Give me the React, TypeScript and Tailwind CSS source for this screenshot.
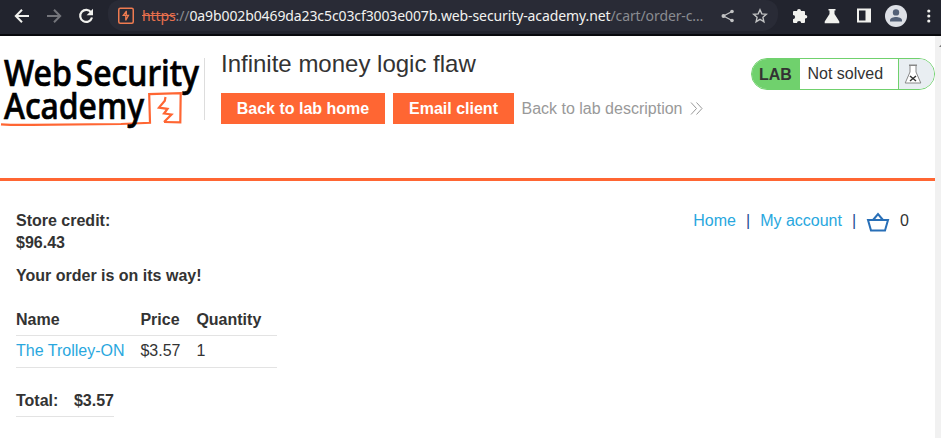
import React from "react";

function BrowserBar() {
  return (
    <div className="flex h-9 w-full items-start border-b-2 border-[#08090d] bg-[#22242e]">
      <div className="flex h-[31px] w-[108px] shrink-0 items-center pl-[14px]">
        <svg width="16" height="16" viewBox="0 0 16 16" fill="none" stroke="#f1f1ee" strokeWidth="2">
          <path d="M15 8H2.5M8 1.7 1.8 8 8 14.3" />
        </svg>
        <svg className="ml-4" width="16" height="16" viewBox="0 0 16 16" fill="none" stroke="#74757b" strokeWidth="2">
          <path d="M1 8h12.5M8 1.7 14.2 8 8 14.3" />
        </svg>
        <svg className="ml-4" width="16" height="16" viewBox="0 0 16 16" fill="none" stroke="#f1f1ee" strokeWidth="2.2">
          <path d="M13.2 4.5A6 6 0 1 0 14 9.5" />
          <path d="M15 .8v6.4H8.6z" fill="#f1f1ee" stroke="none" />
        </svg>
      </div>
      <div className="flex h-[31px] w-[670px] shrink-0 items-center rounded-b-2xl rounded-t-xl bg-[#292b36] pl-[10px]">
        <svg width="16" height="17" viewBox="0 0 16 17" fill="none" stroke="#ef7b50">
          <rect x=".75" y="1.25" width="14.5" height="15" rx="1.5" strokeWidth="1.5" />
          <path d="M8.6 3.800 5.300 8.300h5.200L7.600 13.500M8.300 4v4.300M7.800 8.500v4.500" strokeWidth="1.3" />
        </svg>
        <div className="ml-2 flex h-[31px] w-[564px] items-center whitespace-nowrap font-['Noto_Sans',sans-serif] text-[14px] leading-[31px] tracking-[-0.105px] text-[#898b91]">
          <span className="text-[#e8704d] line-through">https</span>
          <span>://</span>
          <span className="text-[#f2f2f0]">0a9b002b0469da23c5c03cf3003e007b.web-security-academy.net</span>
          <span>/cart/order-c…</span>
        </div>
        <svg className="ml-[15px] shrink-0" width="14" height="14" viewBox="0 0 14 14" fill="#c2c3c4" stroke="#c2c3c4">
          <path d="M11 2.5 2.5 7l8.5 4.5" fill="none" strokeWidth="1.3" />
          <circle cx="11" cy="2.5" r="1.8" stroke="none" />
          <circle cx="2.5" cy="7" r="2" stroke="none" />
          <circle cx="11" cy="11.5" r="1.8" stroke="none" />
        </svg>
        <svg className="ml-[17px] shrink-0" width="16" height="16" viewBox="0 0 16 16" fill="none" stroke="#c2c3c4" strokeWidth="1.4">
          <path d="m8 1.8 1.8 4.1 4.5.4-3.4 3 1 4.4L8 11.4l-3.9 2.3 1-4.4-3.4-3 4.5-.4z" />
        </svg>
      </div>
      <div className="flex h-[31px] flex-1 items-center pl-[14px]">
        <svg className="shrink-0" width="16" height="16" viewBox="0 0 16 16" fill="#f1f1ee">
          <path d="M5 3a2 2 0 0 1 4 0h3a1 1 0 0 1 1 1v3h.5a1.800 1.800 0 0 1 0 3.600H13V14a1 1 0 0 1-1 1H9.200a2.100 2.100 0 0 0-4.200 0H2a1 1 0 0 1-1-1v-2.800a2.100 2.100 0 0 0 0-4.200V4a1 1 0 0 1 1-1z" />
        </svg>
        <svg className="ml-4 shrink-0" width="16" height="16" viewBox="0 0 16 16" fill="#f1f1ee">
          <path d="M4.500 1h7v1.500h-1V6l4.800 7.500v1.800H.7v-1.800L5.500 6V2.500h-1z" />
        </svg>
        <svg className="ml-4 shrink-0" width="15" height="15" viewBox="0 0 15 15" fill="#f1f1ee">
          <path fillRule="evenodd" d="M1 .5h14v14H1zM3 2.500v10h6.500v-10z" />
        </svg>
        <svg className="ml-[14px] shrink-0" width="22" height="22" viewBox="0 0 22 22">
          <circle cx="11" cy="11" r="11" fill="#dde0e6" />
          <circle cx="11" cy="7.400" r="3.200" fill="#536077" />
          <path d="M5 16.500v-1.300c0-2 3.500-3.200 6-3.200s6 1.200 6 3.200v1.300z" fill="#536077" />
        </svg>
        <svg className="ml-5 shrink-0" width="4" height="14" viewBox="0 0 4 14" fill="#f1f1ee">
          <circle cx="1.800" cy="2" r="1.600" />
          <circle cx="1.800" cy="7" r="1.600" />
          <circle cx="1.800" cy="12" r="1.600" />
        </svg>
      </div>
    </div>
  );
}

function AcademyLogo() {
  return (
    <svg className="block shrink-0 overflow-visible" width="204" height="99" viewBox="0 36 204 99">
      <path d="M1 124.300c12 .8 20 .6 31 .5l89-.8 29-1.200-.8-28.700 31.500-1-.4 29.300-16.300-.4" fill="none" stroke="#f63" strokeWidth="2.200" />
      <path d="m165.500 97-.7 3.800-5.800 6.800 8.500 1.200-3.500 4.700 7.500 1-7.500 7.500" fill="none" stroke="#f63" strokeWidth="2.200" />
      <g fill="#000" stroke="#000" strokeWidth=".7" fontFamily="'Noto Sans', sans-serif" fontWeight="500" fontSize="36.500">
        <text x="4" y="86" textLength="68" lengthAdjust="spacingAndGlyphs">Web</text>
        <text x="75.500" y="86" textLength="123.500" lengthAdjust="spacingAndGlyphs">Security</text>
        <text x="4" y="119" textLength="140" lengthAdjust="spacingAndGlyphs">Academy</text>
      </g>
    </svg>
  );
}

function LabStatus() {
  return (
    <div className="mt-[22px] flex h-8 w-[184px] shrink-0 overflow-hidden rounded-full border border-[#70d16d] bg-white">
      <div className="w-12 bg-[#70d16d] pl-[7px] font-bold leading-[31px]">LAB</div>
      <div className="w-[99px] border-r border-[#70d16d] pl-[7.500px] leading-[29px]">Not solved</div>
      <div className="flex-1 bg-[#e9eef2] pl-[5px] pt-[5px]">
        <svg width="18" height="20" viewBox="0 0 18 20" fill="#fff" stroke="#888" strokeWidth="1">
          <path d="M6 1.500V8L1.200 19h15.600L12 8V1.500" />
          <path d="M5 1.200h8" strokeWidth="1.500" />
          <path d="m6 12 6 5M12 12l-6 5" stroke="#333" strokeWidth="1.500" />
        </svg>
      </div>
    </div>
  );
}

function Header() {
  return (
    <header className="flex h-[145px] w-[935px] border-b-[3px] border-[#f63]">
      <AcademyLogo />
      <div className="mt-[22px] h-[62px] w-px shrink-0 bg-[#ddd]" />
      <div className="ml-4 flex-1">
        <h2 className="mt-[13px] text-2xl leading-[30px]">Infinite money logic flaw</h2>
        <div className="mt-[14px] flex h-[31px] items-center">
          <a className="h-[31px] w-[164px] bg-[#f63] text-center font-bold leading-[31px] text-white">Back to lab home</a>
          <a className="ml-2 h-[31px] w-[121px] bg-[#f63] text-center font-bold leading-[31px] text-white">Email client</a>
          <a className="ml-[7.500px] text-[#999]">Back to lab description</a>
          <svg className="ml-2" width="14" height="13" viewBox="0 0 14 13" fill="none" stroke="#999" strokeWidth="1">
            <path d="m1 .5 5.500 6L1 12.500M6.500.5l5.500 6-5.500 6" />
          </svg>
        </div>
      </div>
      <LabStatus />
    </header>
  );
}

function Navigation() {
  return (
    <nav className="mt-[28px] flex h-6 items-center text-[#29a7de]">
      <a>Home</a>
      <span className="ml-[10px] text-[#1d4f91]">|</span>
      <a className="ml-[10px]">My account</a>
      <span className="ml-[10px] text-[#1d4f91]">|</span>
      <svg className="ml-[10px] mt-px" width="24" height="20" viewBox="0 0 24 20" fill="none" stroke="#286fb7" strokeWidth="2">
        <path d="M2 8h20l-3 10.500H5zM7 8l5-6 5 6" />
      </svg>
      <span className="ml-[10px] text-[#333]">0</span>
    </nav>
  );
}

export default function App() {
  return (
    <div className="h-[438px] w-[941px] overflow-hidden bg-white font-['Liberation_Sans',Arial,sans-serif] text-base text-[#333]">
      <BrowserBar />
      <div className="flex h-[402px]">
        <div className="w-[935px]">
          <Header />
          <main className="flex justify-between pl-4 pr-[26px]">
            <div>
              <div className="mt-[29px] font-bold leading-[22px]">
                <p>Store credit:</p>
                <p>$96.43</p>
                <p className="mt-[11px]">Your order is on its way!</p>
              </div>
              <table className="mt-4 w-[261px] table-fixed border-collapse text-left">
                <thead>
                  <tr className="h-8 border-b border-[#e3e3e3]">
                    <th className="w-[124.400px] p-0 pt-0.5">Name</th>
                    <th className="w-[56px] p-0 pt-0.5">Price</th>
                    <th className="p-0 pt-0.5">Quantity</th>
                  </tr>
                </thead>
                <tbody>
                  <tr className="h-8 border-b border-[#e3e3e3]">
                    <td className="p-0 text-[#29a7de]">The Trolley-ON</td>
                    <td className="p-0">$3.57</td>
                    <td className="p-0">1</td>
                  </tr>
                </tbody>
              </table>
              <div className="mt-4 flex h-[33px] w-[98px] items-center justify-between border-b border-[#e3e3e3] pt-0.5 font-bold">
                <span>Total:</span>
                <span>$3.57</span>
              </div>
            </div>
            <Navigation />
          </main>
        </div>
        <div className="w-[6px] overflow-hidden bg-[#f1f1f1] pl-1 pt-[7px]">
          <svg width="7" height="4" viewBox="0 0 7 4" fill="#7b7b7b"><path d="M0 4 3.500 0 7 4z" /></svg>
        </div>
      </div>
    </div>
  );
}
